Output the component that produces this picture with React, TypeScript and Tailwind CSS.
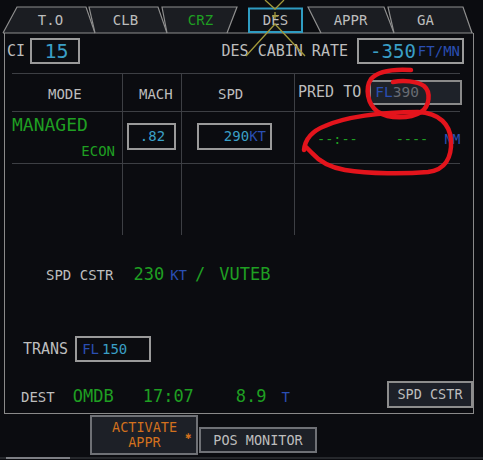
import React from "react";

// FMS "PERF" page, DES tab selected

const gray = "text-[#bdbdbd]";
const green = "text-[#1f9f22]";
const cyan = "text-[#3a9fc6]";
const blue = "text-[#2a4fb3]";

function Tabs() {
  const tabs = [
    { label: "T.O", color: gray },
    { label: "CLB", color: gray },
    { label: "CRZ", color: green },
    { label: "DES", color: gray },
    { label: "APPR", color: gray },
    { label: "GA", color: gray },
  ];
  return (
    <div className="relative h-[33px]">
      <svg className="absolute inset-0" width="483" height="34" viewBox="0 0 483 34">
        <g fill="#1b1d22" stroke="#8e8e8e" strokeWidth="1.2">
          <path d="M3,33 L17,7 L86,7 L95,33" />
          <path d="M95,33 L89,7 L158,7 L167,33" />
          <path d="M167,33 L162,7 L237,7 L227,33" />
          <path d="M321,33 L308,7 L384,7 L394,33" />
          <path d="M394,33 L388,7 L463,7 L472,33" />
        </g>
        <line x1="3" y1="33" x2="473" y2="33" stroke="#8e8e8e" strokeWidth="1.2" />
        <rect x="249" y="8.5" width="53" height="23.5" fill="#111317" stroke="#2f9cc2" strokeWidth="2" />
      </svg>
      <div className="relative flex pl-[13px] pt-[11px]">
        {tabs.map((t) => (
          <div key={t.label} className={`w-[75px] text-center text-[14px] leading-[18px] ${t.color}`}>
            {t.label}
          </div>
        ))}
      </div>
    </div>
  );
}

function Box({ className, children }: { className: string; children: React.ReactNode }) {
  return <div className={`shrink-0 border-2 border-[#9a9a9a] flex items-center whitespace-nowrap ${className}`}>{children}</div>;
}

export default function App() {
  return (
    <div className="relative w-[483px] h-[460px] overflow-hidden bg-[#0b0c10] whitespace-nowrap font-['DejaVu_Sans_Mono',monospace]">
      <Tabs />

      <div className="ml-[4px] w-[470px] h-[381px] border-l border-r border-b border-[#8a8a8a] flex flex-col">
        {/* CI / cabin rate */}
        <div className="flex items-center h-[26px] mt-[5px]">
          <span className={`ml-[2px] text-[15px] ${gray}`}>CI</span>
          <Box className="ml-[5px] w-[50px] h-[26px] justify-center pl-[3px] bg-[#0c0e12]">
            <span className={`text-[20px] ${cyan}`}>15</span>
          </Box>
          <div className="ml-auto flex items-center">
            <span className={`text-[15px] ${gray}`}>DES CABIN RATE</span>
            <Box className="ml-[9px] mr-[9px] w-[107px] h-[26px] justify-end pr-[2px] bg-[#0c0e12]">
              <span className={`text-[19px] ${cyan}`}>-350</span>
              <span className={`ml-[2px] text-[14px] ${blue}`}>FT/MN</span>
            </Box>
          </div>
        </div>

        {/* table */}
        <div className="mt-[9px] ml-[7px] w-[448px] border-t border-[#3d3f44] flex flex-col">
          <div className="flex h-[38px] border-b border-[#3d3f44]">
            <div className={`w-[110px] shrink-0 flex items-center pl-[36px] pt-[4px] text-[14px] ${gray}`}>MODE</div>
            <div className={`w-[59px] shrink-0 border-l border-[#3d3f44] flex items-center pl-[16px] pt-[4px] text-[14px] ${gray}`}>MACH</div>
            <div className={`w-[113px] shrink-0 border-l border-[#3d3f44] flex items-center pl-[36px] pt-[4px] text-[14px] ${gray}`}>SPD</div>
            <div className="w-[166px] shrink-0 border-l border-[#3d3f44] flex items-center pl-[3px]">
              <span className={`shrink-0 text-[15px] ${gray}`}>PRED TO</span>
              <div className="shrink-0 ml-[8px] w-[93px] h-[25px] border-2 border-[#8a8a8a] bg-[#1e2229] flex items-center pl-[4px] text-[14.5px]">
                <span className={blue}>FL</span>
                <span className="text-[#676b72]">390</span>
              </div>
            </div>
          </div>

          <div className="flex h-[52px] border-b border-[#3d3f44]">
            <div className="w-[110px] shrink-0 flex flex-col">
              <span className={`mt-[2px] text-[18px] leading-[22px] ${green}`}>MANAGED</span>
              <span className={`self-end pr-[7px] mt-[6px] text-[14px] leading-[18px] ${green}`}>ECON</span>
            </div>
            <div className="w-[59px] shrink-0 border-l border-[#3d3f44] pl-[4px] pt-[11px]">
              <Box className="w-[49px] h-[27px] justify-center pl-[2px]">
                <span className={`text-[14px] ${cyan}`}>.82</span>
              </Box>
            </div>
            <div className="w-[113px] shrink-0 border-l border-[#3d3f44] pl-[15px] pt-[11px]">
              <Box className="w-[75px] h-[27px] justify-end pr-[4px] text-[14px]">
                <span className={cyan}>290</span>
                <span className={blue}>KT</span>
              </Box>
            </div>
            <div className="w-[166px] shrink-0 border-l border-[#3d3f44] flex items-start pl-[22px] pt-[18px] text-[13.5px] leading-[18px]">
              <span className={`shrink-0 ${green}`}>--:--</span>
              <span className={`shrink-0 ml-[38px] ${green}`}>----</span>
              <span className={`shrink-0 ml-[16px] ${blue}`}>NM</span>
            </div>
          </div>

          <div className="flex h-[71px]">
            <div className="w-[110px] shrink-0" />
            <div className="w-[59px] shrink-0 border-l border-[#3d3f44]" />
            <div className="w-[113px] shrink-0 border-l border-[#3d3f44]" />
            <div className="w-[166px] shrink-0 border-l border-[#3d3f44]" />
          </div>
        </div>

        {/* speed constraint */}
        <div className="mt-[28px] h-[22px] flex items-baseline leading-[22px]">
          <span className={`ml-[41px] text-[14px] ${gray}`}>SPD CSTR</span>
          <span className={`ml-[20px] text-[17px] ${green}`}>230</span>
          <span className={`ml-[6px] text-[14px] ${blue}`}>KT</span>
          <span className={`ml-[8px] text-[17px] ${green}`}>/</span>
          <span className={`ml-[14px] text-[17px] ${green}`}>VUTEB</span>
        </div>

        {/* trans */}
        <div className="mt-[51px] h-[26px] flex items-center">
          <span className={`ml-[18px] text-[15px] ${gray}`}>TRANS</span>
          <Box className="ml-[7px] w-[76px] h-[26px] pl-[5px] text-[14px]">
            <span className={blue}>FL</span>
            <span className={`ml-[3px] ${cyan}`}>150</span>
          </Box>
        </div>

        {/* dest */}
        <div className="mt-[19px] h-[27px] flex items-center">
          <div className="pt-[5px] flex items-baseline">
            <span className={`ml-[16px] text-[14px] ${gray}`}>DEST</span>
            <span className={`ml-[18px] text-[17px] ${green}`}>OMDB</span>
            <span className={`ml-[29px] text-[17px] ${green}`}>17:07</span>
            <span className={`ml-[42px] text-[17px] ${green}`}>8.9</span>
            <span className={`ml-[15px] text-[14px] ${blue}`}>T</span>
          </div>
          <button className={`ml-auto w-[86px] h-[27px] border-2 border-[#8d8d8d] bg-[#1d2028] text-[13.5px] ${gray}`}>
            SPD CSTR
          </button>
        </div>
      </div>

      {/* bottom buttons */}
      <div className="flex items-start h-[43px]">
        <button className="ml-[90px] mt-[1px] w-[108px] h-[40px] border-2 border-[#6f7176] bg-[#1d2027] flex items-center pl-[20px] text-[#d2711e]">
          <span className="w-[65px] text-center text-[13.5px] leading-[15.5px]">
            ACTIVATE
            <br />
            APPR
          </span>
          <span className="ml-[8px] text-[10px]">✱</span>
        </button>
        <button className={`ml-[1px] mt-[13px] w-[118px] h-[26px] border-2 border-[#6f7176] bg-[#1d2027] text-[13.5px] ${gray}`}>
          POS MONITOR
        </button>
      </div>
      <div className="h-[2px] bg-[#26282c] flex">
        <div className="ml-[6px] w-[64px] bg-[#7d7f84]" />
      </div>

      {/* overlays: selection marker and red hand annotations */}
      <svg className="absolute inset-0 pointer-events-none" width="483" height="460" viewBox="0 0 483 460">
        <g stroke="#a2983a" strokeWidth="1.3" fill="none">
          <path d="M265,0 L275,9 L284,0" />
          <path d="M246,56 L275,24 L305,56" />
          <path d="M275,12 L275,19 M272,16 L278,16" />
        </g>
        <g stroke="#e3141c" strokeWidth="4.5" fill="none" strokeLinecap="round" strokeLinejoin="round">
          <path d="M411,70 C395,69 378,71 371,79 C365,88 367,104 378,112 C389,119 410,119 421,112 C430,106 431,92 424,86 C417,81 403,80 393,82" />
          <path d="M304,150 C305,140 312,131 325,126 C345,117 380,112 418,112 C440,113 450,125 451,140 C452,158 445,170 428,172 C405,174 370,174 345,170 C328,167 318,160 312,153 L305,146" />
        </g>
      </svg>
    </div>
  );
}
